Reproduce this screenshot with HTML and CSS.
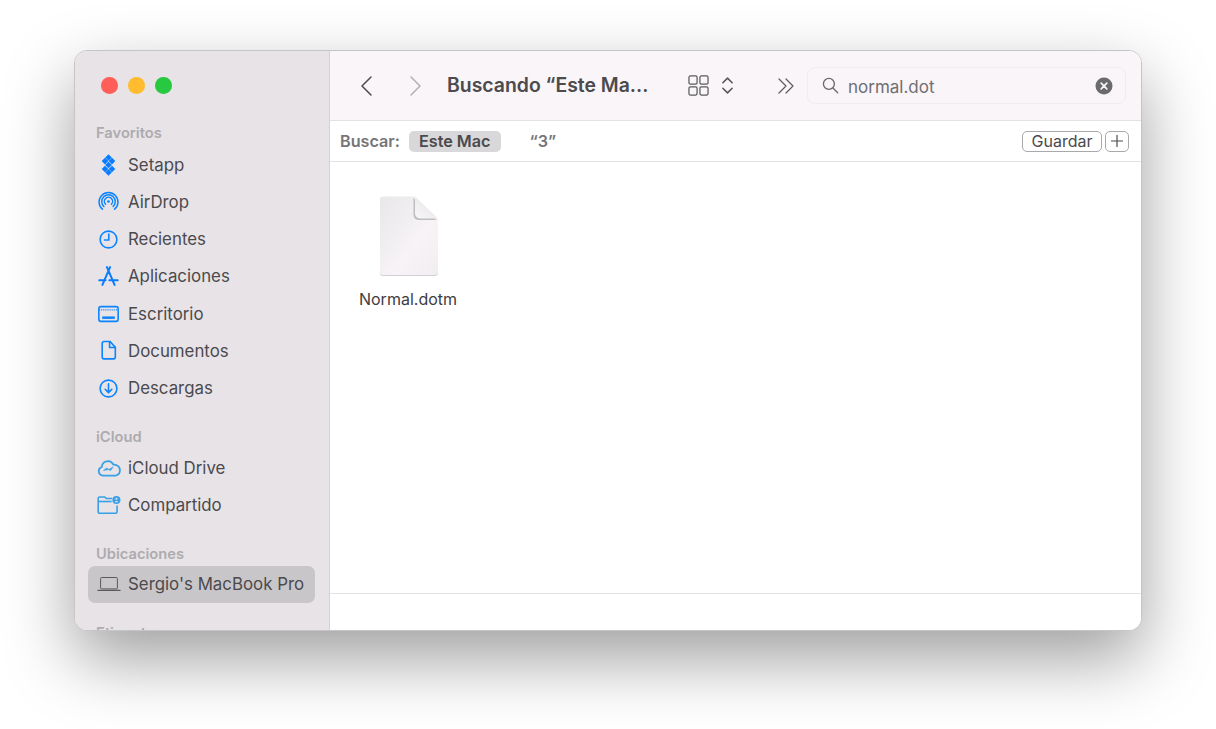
FILE: index.html
```html
<!DOCTYPE html>
<html lang="es">
<head>
<meta charset="utf-8">
<title>Finder</title>
<link rel="stylesheet" href="styles.css">
</head>
<body>
<div class="window">
  <aside class="sidebar">
    <div class="lights"><span class="light red"></span><span class="light yellow"></span><span class="light green"></span></div>
    <div class="label first">Favoritos</div>
    <div class="row"><svg class="ico tall" viewBox="0 0 21 22" fill="#0a7cff"><path d="M10.500.2l3.300 3.300-3.300 3.300-3.300-3.300zM7 3.800l3.300 3.300L7 10.400 3.700 7.100zM14 3.800l3.300 3.300-3.300 3.300-3.300-3.300zM10.500 7.700l3.300 3.300-3.300 3.300L7.200 11zM7 11.700l3.300 3.300L7 18.300 3.700 15zM14 11.700l3.300 3.300-3.300 3.300-3.300-3.300zM10.500 15.200l3.300 3.300-3.300 3.300-3.300-3.300z"/></svg><span>Setapp</span></div>
    <div class="row"><svg class="ico" viewBox="0 0 20 20" fill="none" stroke="#0a84ff" stroke-width="1.4" stroke-linecap="round"><path d="M4.200 17.300A9 9 0 1 1 15.800 17.300"/><path d="M5.600 14.700A6.400 6.400 0 1 1 14.400 14.700"/><path d="M7.200 12.600A3.900 3.900 0 1 1 12.800 12.600"/><circle cx="10" cy="10" r="1.300" fill="#0a84ff" stroke="none"/></svg><span>AirDrop</span></div>
    <div class="row"><svg class="ico" viewBox="0 0 20 20" fill="none" stroke="#0a84ff" stroke-width="1.5" stroke-linecap="round"><circle cx="10" cy="10" r="8"/><path d="M10.300 4.800v5.700H6.200"/></svg><span>Recientes</span></div>
    <div class="row"><svg class="ico" viewBox="0 0 20 20" fill="none" stroke="#0a7cff" stroke-width="1.900" stroke-linecap="round"><path d="M11.500 1L4.200 18M8.500 1l7.300 17M1.200 13.600h6M10.800 13.600h8"/></svg><span>Aplicaciones</span></div>
    <div class="row"><svg class="ico flat" viewBox="0 0 20 16" fill="none" stroke="#0a84ff" stroke-width="1.5"><rect x="0.800" y="1" width="18.400" height="14" rx="2"/><path d="M1 4h18" stroke-dasharray="1 1" stroke-width="1.200"/><path d="M4 11.500h12" stroke-width="2.400"/></svg><span>Escritorio</span></div>
    <div class="row"><svg class="ico" viewBox="0 0 20 20" fill="none" stroke="#0a84ff" stroke-width="1.5" stroke-linejoin="round"><path d="M4 3.200a1.700 1.700 0 0 1 1.700-1.700h5.800L16.500 7v9.300a1.700 1.700 0 0 1-1.700 1.700H5.700A1.700 1.700 0 0 1 4 16.300z"/><path d="M11 1.500V7.200h5.500"/></svg><span>Documentos</span></div>
    <div class="row"><svg class="ico" viewBox="0 0 20 20" fill="none" stroke="#0a84ff" stroke-width="1.5" stroke-linecap="round" stroke-linejoin="round"><circle cx="10" cy="10" r="8"/><path d="M10 5.600v8.200M6.800 10.700l3.200 3.200 3.200-3.200"/></svg><span>Descargas</span></div>
    <div class="label">iCloud</div>
    <div class="row"><svg class="ico wide" viewBox="0 0 22 16" fill="none" stroke="#37a0e6" stroke-width="1.600" stroke-linejoin="round"><path d="M5.400 14.600a4 4 0 0 1-1-7.800 5.600 5.600 0 0 1 10.600-2.200 4 4 0 0 1 3 .6 5 5 0 0 1-.6 9.400z" transform="translate(0 .3)"/><path d="M6 10.200l3-2.200 1.800 1.400 4-2.400-2.400 3.300-1.900-.9z" fill="#37a0e6" stroke-width=".6"/></svg><span>iCloud Drive</span></div>
    <div class="row"><svg class="ico wide" viewBox="0 0 22 17" fill="none" stroke="#37a0e6" stroke-width="1.500" stroke-linejoin="round"><path d="M14 2.300H8.400L7 .9H2.200A1.400 1.400 0 0 0 .8 2.300v12.600a1.400 1.400 0 0 0 1.400 1.400h15a1.400 1.400 0 0 0 1.400-1.400V9"/><path d="M1 5.200h12.500"/><circle cx="18" cy="3.800" r="3.800" fill="#37a0e6" stroke="none"/><circle cx="18" cy="2.700" r="1" fill="#e7e3e7" stroke="none"/><path d="M16.300 5.900a1.800 1.800 0 0 1 3.400 0z" fill="#e7e3e7" stroke="none"/></svg><span>Compartido</span></div>
    <div class="label">Ubicaciones</div>
    <div class="row selected"><svg class="ico wide" viewBox="0 0 24 16" fill="none" stroke="#5a595c" stroke-width="1"><rect x="3.600" y="1.500" width="16.800" height="11.400" rx="1"/><path d="M1 14.400h22" stroke-width="1.400" stroke-linecap="round"/></svg><span>Sergio's MacBook Pro</span></div>
    <div class="label">Etiquetas</div>
  </aside>
  <main class="main">
    <header class="toolbar">
      <svg class="chev" viewBox="0 0 14 22" fill="none" stroke="#4d4c4f" stroke-width="1.500" stroke-linecap="round" stroke-linejoin="round"><path d="M12 2L3 11l9 9"/></svg>
      <svg class="chev fwd" viewBox="0 0 14 22" fill="none" stroke="#b3b1b4" stroke-width="1.500" stroke-linecap="round" stroke-linejoin="round"><path d="M2 2l9 9-9 9"/></svg>
      <h1 class="title">Buscando “Este Ma...</h1>
      <svg class="grid-ico" viewBox="0 0 22 22" fill="none" stroke="#5a595c" stroke-width="1.300"><rect x="1" y="1" width="8.500" height="8.500" rx="1.500"/><rect x="12.500" y="1" width="8.500" height="8.500" rx="1.500"/><rect x="1" y="12.500" width="8.500" height="8.500" rx="1.500"/><rect x="12.500" y="12.500" width="8.500" height="8.500" rx="1.500"/></svg>
      <svg class="updown" viewBox="0 0 14 20" fill="none" stroke="#5a595c" stroke-width="1.700" stroke-linecap="round" stroke-linejoin="round"><path d="M2 7l5-5 5 5M2 13l5 5 5-5"/></svg>
      <svg class="more" viewBox="0 0 18 16" fill="none" stroke="#5a595c" stroke-width="1.200" stroke-linecap="round" stroke-linejoin="round"><path d="M2 1l7 7-7 7M9 1l7 7-7 7"/></svg>
      <div class="search">
        <svg class="lens" viewBox="0 0 18 18" fill="none" stroke="#6a696c" stroke-width="1.400" stroke-linecap="round"><circle cx="7.300" cy="7.300" r="5.800"/><path d="M11.600 11.600l5 5"/></svg>
        <span class="query">normal.dot</span>
        <svg class="clear" viewBox="0 0 18 18"><circle cx="9" cy="9" r="8.500" fill="#6b6a6d"/><path d="M6.200 6.200l5.600 5.600M11.800 6.200l-5.600 5.600" stroke="#f8f5f8" stroke-width="1.700" stroke-linecap="round"/></svg>
      </div>
    </header>
    <div class="scope">
      <span class="scope-label">Buscar:</span>
      <span class="pill">Este Mac</span>
      <span class="scope-alt">“3”</span>
      <span class="btn save">Guardar</span>
      <span class="btn plus"><svg viewBox="0 0 14 14" fill="none" stroke="#4d4c4f" stroke-width="1.200"><path d="M7 1v12M1 7h12"/></svg></span>
    </div>
    <section class="files">
      <figure class="file">
        <svg class="doc" viewBox="0 0 58 81">
          <defs>
            <linearGradient id="paper" x1="0" y1="0" x2="1" y2="1"><stop offset="0" stop-color="#e8e7e9"/><stop offset=".6" stop-color="#f7f3f6"/><stop offset="1" stop-color="#f1eef1"/></linearGradient>
            <linearGradient id="fold" x1="0" y1="1" x2="1" y2="0"><stop offset="0" stop-color="#f9f8f9"/><stop offset="1" stop-color="#e2e0e2"/></linearGradient>
          </defs>
          <path d="M3 1h32l23 23v53a3 3 0 0 1-3 3H3a3 3 0 0 1-3-3V4a3 3 0 0 1 3-3z" fill="#d3d1d3"/>
          <path d="M3 .5h32l23 23v52.500a3 3 0 0 1-3 3H3a3 3 0 0 1-3-3V3.500a3 3 0 0 1 3-3z" fill="url(#paper)"/>
          <path d="M35 .5v17a5 5 0 0 0 5 5h18z" fill="#bfbdbf" transform="translate(-1.500 1.500)"/>
          <path d="M35 .5v17a5 5 0 0 0 5 5h18z" fill="url(#fold)"/>
        </svg>
        <figcaption>Normal.dotm</figcaption>
      </figure>
    </section>
    <footer class="status"></footer>
  </main>
</div>
</body>
</html>
```
FILE: styles.css
```css
* { box-sizing: border-box; }
html, body { margin: 0; height: 100%; background: #fff; overflow: hidden; }
body { padding: 50px 74px 0; font-family: Inter, "Noto Sans", sans-serif; }

.window {
  width: 1068px;
  height: 581px;
  display: flex;
  border: 1px solid #c6c5c6;
  border-radius: 13px;
  overflow: hidden;
  background: #fff;
  box-shadow: 0 28px 68px rgba(0, 0, 0, .38);
}

.sidebar {
  width: 255px;
  flex: none;
  padding: 0 14px 0 13px;
  background: #e7e3e7;
  border-right: 1px solid #d5d2d5;
  overflow: hidden;
  color: #4b4a4d;
}
.lights { display: flex; gap: 10.5px; padding: 26px 0 0 13px; height: 51px; }
.light { width: 16.5px; height: 16.5px; border-radius: 50%; }
.red { background: #ff5f57; }
.yellow { background: #febc2e; }
.green { background: #28c840; }

.label {
  height: 22px;
  margin: 20.3px 0 0;
  padding-left: 8px;
  font-size: 14.7px;
  line-height: 20px;
  font-weight: 600;
  color: #adabae;
}
.label.first { height: 23px; margin-top: 21px; }

.row {
  height: 37.25px;
  display: flex;
  align-items: center;
  gap: 9px;
  padding-left: 10px;
  font-size: 16.85px;
  color: #4b4a4d;
  white-space: nowrap;
}
.row.selected { background: #c9c6ca; border-radius: 7px; }
.ico { width: 21px; height: 21px; flex: none; }
.ico.tall { height: 22px; }
.ico.flat { height: 18px; }
.ico.wide { width: 24px; height: 18px; margin: 0 -1.5px; }

.main { flex: 1; display: flex; flex-direction: column; min-width: 0; }

.toolbar {
  height: 70px;
  flex: none;
  display: flex;
  align-items: center;
  padding: 0 15px 0 29px;
  background: #f9f5f9;
  border-bottom: 1px solid #e3e1e3;
}
.chev { width: 14px; height: 22px; flex: none; }
.fwd { margin-left: 36px; }
.title { margin: -2px 0 0 24px; width: 241px; flex: none; font-size: 19.4px; font-weight: 600; color: #4b4a4d; white-space: nowrap; }
.grid-ico { width: 21px; height: 21px; flex: none; }
.updown { width: 13px; height: 19px; margin-left: 12px; flex: none; }
.more { width: 18px; height: 16px; margin-left: 43px; flex: none; }
.search {
  flex: 1;
  height: 37px;
  margin-left: 12px;
  display: flex;
  align-items: center;
  padding: 0 12px 0 14px;
  border: 1px solid #efecef;
  border-radius: 8px;
}
.lens { width: 17px; height: 17px; flex: none; }
.query { flex: 1; margin: 2px 0 0 9px; font-size: 17px; color: #6f6e71; }
.clear { width: 18px; height: 18px; flex: none; }

.scope {
  height: 41px;
  flex: none;
  display: flex;
  align-items: center;
  padding: 0 12px 0 10px;
  background: #fff;
  border-bottom: 1px solid #e3e1e3;
  font-size: 16.2px;
  font-weight: 600;
}
.scope-label { color: #767578; }
.pill { margin-left: 9px; padding: 0 10px; height: 21px; line-height: 21px; border-radius: 5px; background: #d8d7d9; color: #4b4a4d; }
.scope-alt { margin-left: 29px; color: #767578; flex: 1; }
.btn { height: 21px; border: 1px solid #a9a8aa; border-radius: 5px; background: #fff; color: #4b4a4d; font-weight: 400; font-size: 16px; line-height: 19px; display: flex; align-items: center; justify-content: center; }
.save { width: 80px; }
.plus { width: 24px; margin-left: 3px; }
.plus svg { width: 14px; height: 14px; }

.files { flex: 1; padding: 34px 0 0 28px; background: #fff; }
.file { margin: 0; width: 100px; display: flex; flex-direction: column; align-items: center; }
.doc { width: 58px; height: 81px; margin-left: 1px; }
figcaption { margin-top: 12px; font-size: 16px; color: #3d3c3f; white-space: nowrap; }

.status { height: 37px; flex: none; border-top: 1px solid #e3e1e3; background: #fff; }
```
